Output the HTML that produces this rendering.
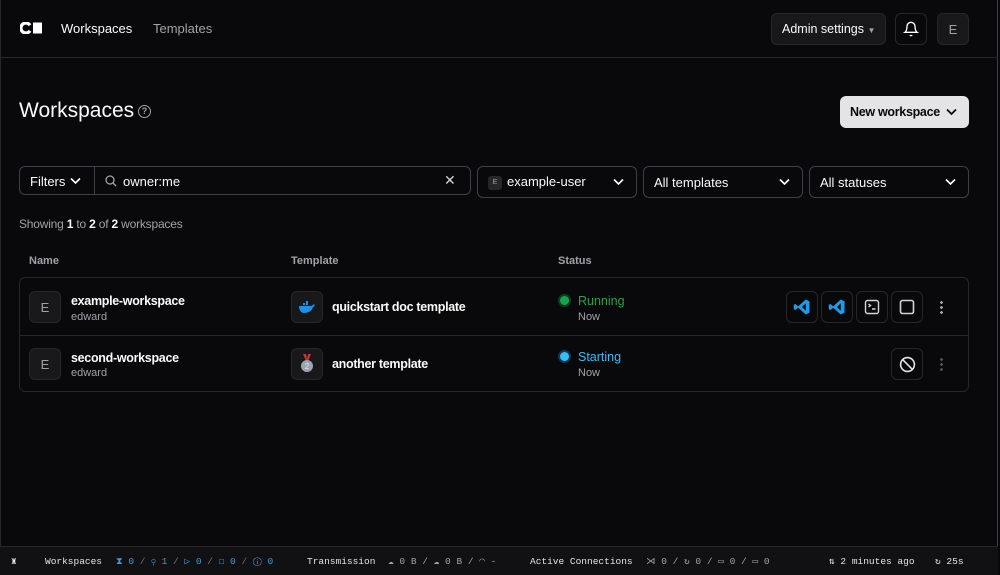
<!DOCTYPE html>
<html><head><meta charset="utf-8"><style>
*{box-sizing:border-box;margin:0;padding:0}
body{width:1000px;height:575px;background:#09090b;color:#fafafa;font-family:"Liberation Sans",sans-serif;position:relative;overflow:hidden;font-size:13px}
.frame{position:absolute;left:0;top:0;width:998px;height:575px;border-left:1px solid #27272a;border-right:1px solid #3f3f46}
.abs{position:absolute;white-space:nowrap}
.btn{position:absolute;border:1px solid #27272a;border-radius:6px;background:#09090b}
.sel{position:absolute;top:166px;height:32px;border:1px solid #3f3f46;border-radius:6px;font-size:13px;padding:0 12px 0 10px;display:flex;align-items:center;justify-content:space-between}
.av{position:absolute;width:32px;height:32px;border-radius:6px;background:#18181b;border:1px solid #27272a;display:flex;align-items:center;justify-content:center;color:#a1a1aa;font-size:13px}
.mono{font-family:"Liberation Mono",monospace;font-size:9.5px;color:#e4e4e7;top:556px}
.blue{color:#3b9bdc}
.g{color:#71717a}
.nm{font-size:12.5px;font-weight:bold;letter-spacing:-0.3px}
</style></head><body>
<div class="frame"></div>
<div class="abs" style="left:20px;top:22px;"><svg width="22" height="12" viewBox="0 0 22 12"><path d="M10 3.2A5 5 0 1 0 10 8.8" stroke="#fff" stroke-width="3.2" fill="none"/><rect x="13" y="0.5" width="9" height="11" fill="#fff"/></svg></div>
<div class="abs" style="left:61px;top:21px;font-size:13px;color:#fafafa">Workspaces</div>
<div class="abs" style="left:153px;top:21px;font-size:13px;color:#a1a1aa">Templates</div>
<div class="btn" style="left:771px;top:13px;width:115px;height:32px;background:#18181b;font-size:12.5px;padding:8px 10px;white-space:nowrap">Admin settings <span style="font-size:8px;color:#a1a1aa">&#9660;</span></div>
<div class="btn" style="left:895px;top:13px;width:32px;height:32px;display:flex;align-items:center;justify-content:center"><svg width="16" height="16" viewBox="0 0 24 24" fill="none" stroke="#fff" stroke-width="2"><path d="M6 8a6 6 0 0 1 12 0c0 7 3 9 3 9H3s3-2 3-9"/><path d="M10.3 21a1.9 1.9 0 0 0 3.4 0"/></svg></div>
<div class="btn" style="left:937px;top:13px;width:32px;height:32px;background:#18181b;display:flex;align-items:center;justify-content:center;color:#a1a1aa">E</div>
<div class="abs" style="left:0;top:57px;width:998px;height:1px;background:#27272a"></div>
<div class="abs" style="left:19px;top:99px;font-size:21px">Workspaces</div>
<div class="abs" style="left:138px;top:105px;width:13px;height:13px;border:1.5px solid #a1a1aa;border-radius:50%;color:#a1a1aa;font-size:9px;text-align:center;line-height:10px;font-weight:bold">?</div>
<div class="abs" style="left:840px;top:96px;width:129px;height:32px;background:#e4e4e7;border-radius:6px;color:#09090b;font-weight:bold;font-size:12.5px;letter-spacing:-0.3px;padding:9px 10px">New workspace <svg style="position:absolute;right:12px;top:12px" width="11" height="8" viewBox="0 0 11 8"><path d="M1 1.5l4.5 4.5L10 1.5" stroke="#09090b" stroke-width="1.8" fill="none"/></svg></div>
<div class="abs" style="left:19px;top:166px;width:452px;height:29px;border:1px solid #3f3f46;border-radius:6px"></div>
<div class="abs" style="left:94px;top:166px;width:1px;height:29px;background:#3f3f46"></div>
<div class="abs" style="left:30px;top:174px;font-size:13px">Filters</div>
<svg class="abs" style="left:70px;top:177px" width="11" height="8" viewBox="0 0 11 8"><path d="M1 1.5l4.5 4.5L10 1.5" stroke="#fff" stroke-width="1.6" fill="none"/></svg>
<svg class="abs" style="left:105px;top:175px" width="12" height="12" viewBox="0 0 12 12" fill="none" stroke="#a1a1aa" stroke-width="1.3"><circle cx="5" cy="5" r="4"/><path d="M8 8l3 3"/></svg>
<div class="abs" style="left:123px;top:174px;font-size:13px">owner:me</div>
<div class="abs" style="left:444px;top:172px;font-size:14px;color:#d4d4d8">✕</div>
<div class="sel" style="left:477px;width:160px"><span><span style="display:inline-block;width:14px;height:14px;background:#27272a;border-radius:3px;font-size:7px;color:#a1a1aa;text-align:center;line-height:14px;margin-right:5px;vertical-align:middle">E</span>example-user</span><svg width="11" height="8" viewBox="0 0 11 8"><path d="M1 1.5l4.5 4.5L10 1.5" stroke="#fff" stroke-width="1.6" fill="none"/></svg></div>
<div class="sel" style="left:643px;width:160px"><span>All templates</span><svg width="11" height="8" viewBox="0 0 11 8"><path d="M1 1.5l4.5 4.5L10 1.5" stroke="#fff" stroke-width="1.6" fill="none"/></svg></div>
<div class="sel" style="left:809px;width:160px"><span>All statuses</span><svg width="11" height="8" viewBox="0 0 11 8"><path d="M1 1.5l4.5 4.5L10 1.5" stroke="#fff" stroke-width="1.6" fill="none"/></svg></div>
<div class="abs" style="left:19px;top:217px;font-size:12px;color:#a1a1aa;letter-spacing:-0.2px">Showing <b style="color:#fafafa">1</b> to <b style="color:#fafafa">2</b> of <b style="color:#fafafa">2</b> workspaces</div>
<div class="abs" style="left:29px;top:255px;font-size:11px;color:#a1a1aa;font-weight:bold">Name</div>
<div class="abs" style="left:291px;top:255px;font-size:11px;color:#a1a1aa;font-weight:bold">Template</div>
<div class="abs" style="left:558px;top:255px;font-size:11px;color:#a1a1aa;font-weight:bold">Status</div>
<div class="abs" style="left:19px;top:277px;width:950px;height:115px;border:1px solid #27272a;border-radius:6px"></div>
<div class="abs" style="left:19px;top:335px;width:950px;height:1px;background:#27272a"></div>
<div class="av" style="left:29px;top:291px">E</div>
<div class="abs nm" style="left:71px;top:294px">example-workspace</div>
<div class="abs" style="left:71px;top:311px;font-size:11px;color:#a1a1aa">edward</div>
<div class="av" style="left:291px;top:291px"><svg width="18" height="12" viewBox="0 0 18 12"><path d="M1 5h13c1-2 2-2 3-1-1 1-1 2-2 2-1 4-5 6-9 6C3 12 1 9 1 5z" fill="#1d91e6"/><rect x="5" y="2" width="2" height="2" fill="#1d91e6"/><rect x="8" y="2" width="2" height="2" fill="#1d91e6"/><rect x="8" y="0" width="2" height="2" fill="#1d91e6"/></svg></div>
<div class="abs nm" style="left:332px;top:300px">quickstart doc template</div>
<div class="abs" style="left:560px;top:296px;width:9px;height:9px;border-radius:50%;background:#16a34a;box-shadow:0 0 0 2px #0f3d22"></div>
<div class="abs" style="left:578px;top:294px;font-size:12.5px;color:#22a34a">Running</div>
<div class="abs" style="left:578px;top:311px;font-size:11px;color:#a1a1aa">Now</div>
<div class="btn" style="left:786px;top:291px;width:32px;height:32px;display:flex;align-items:center;justify-content:center"><svg width="18" height="18" viewBox="0 0 24 24"><path d="M17 2l5 2.5v15L17 22 7 13l-4 3-2-1V9l2-1 4 3zM17 7l-5 5 5 5z" fill="#1e9be8" fill-rule="evenodd"/></svg></div>
<div class="btn" style="left:821px;top:291px;width:32px;height:32px;display:flex;align-items:center;justify-content:center"><svg width="18" height="18" viewBox="0 0 24 24"><path d="M17 2l5 2.5v15L17 22 7 13l-4 3-2-1V9l2-1 4 3zM17 7l-5 5 5 5z" fill="#1e9be8" fill-rule="evenodd"/></svg></div>
<div class="btn" style="left:856px;top:291px;width:32px;height:32px;display:flex;align-items:center;justify-content:center"><svg width="16" height="16" viewBox="0 0 16 16" fill="none" stroke="#d4d4d8" stroke-width="1.4"><rect x="1.5" y="1.5" width="13" height="13" rx="2"/><path d="M4.5 5l2 1.5-2 1.5M8 10h3.5"/></svg></div>
<div class="btn" style="left:891px;top:291px;width:32px;height:32px;display:flex;align-items:center;justify-content:center"><svg width="16" height="16" viewBox="0 0 16 16" fill="none" stroke="#d4d4d8" stroke-width="1.6"><rect x="1.5" y="1.5" width="13" height="13" rx="2"/></svg></div>
<div class="abs" style="left:940px;top:300px;width:3px;height:14px;background:radial-gradient(circle,#a1a1aa 1.3px,transparent 1.5px) 0 0/3px 5px"></div>
<div class="av" style="left:29px;top:348px">E</div>
<div class="abs nm" style="left:71px;top:351px">second-workspace</div>
<div class="abs" style="left:71px;top:367px;font-size:11px;color:#a1a1aa">edward</div>
<div class="av" style="left:291px;top:348px"><svg width="14" height="20" viewBox="0 0 14 20"><path d="M3 0h3l1 5 1-5h3l-3 7H6z" fill="#c0392b"/><circle cx="7" cy="12" r="6" fill="#9ca3af"/><text x="7" y="15" font-size="8" text-anchor="middle" fill="#e5e7eb" font-family="Liberation Sans">2</text></svg></div>
<div class="abs nm" style="left:332px;top:357px">another template</div>
<div class="abs" style="left:560px;top:352px;width:9px;height:9px;border-radius:50%;background:#38bdf8;box-shadow:0 0 0 2px #0c3a56"></div>
<div class="abs" style="left:578px;top:350px;font-size:12.5px;color:#38bdf8">Starting</div>
<div class="abs" style="left:578px;top:367px;font-size:11px;color:#a1a1aa">Now</div>
<div class="btn" style="left:891px;top:348px;width:32px;height:32px;display:flex;align-items:center;justify-content:center"><svg width="17" height="17" viewBox="0 0 16 16" fill="none" stroke="#e4e4e7" stroke-width="1.5"><circle cx="8" cy="8" r="6.5"/><path d="M3.5 3.5l9 9"/></svg></div>
<div class="abs" style="left:940px;top:357px;width:3px;height:14px;background:radial-gradient(circle,#52525b 1.3px,transparent 1.5px) 0 0/3px 5px"></div>
<div class="abs" style="left:0;top:546px;width:998px;height:29px;background:#111113;border-top:1px solid #27272a"></div>
<div class="abs mono" style="left:11px">♜</div>
<div class="abs mono" style="left:45px">Workspaces</div>
<div class="abs mono blue" style="left:116px">⧗ 0 <span class="g">/</span> ⚲ 1 <span class="g">/</span> ▷ 0 <span class="g">/</span> ☐ 0 <span class="g">/</span> ⓘ 0</div>
<div class="abs mono" style="left:307px">Transmission</div>
<div class="abs mono" style="left:388px;color:#a1a1aa">☁ 0 B / ☁ 0 B / ◠ -</div>
<div class="abs mono" style="left:530px">Active Connections</div>
<div class="abs mono" style="left:646px;color:#a1a1aa">⋊ 0 / ↻ 0 / ▭ 0 / ▭ 0</div>
<div class="abs mono" style="left:829px">⇅ 2 minutes ago</div>
<div class="abs mono" style="left:935px">↻  25s</div>
</body></html>
